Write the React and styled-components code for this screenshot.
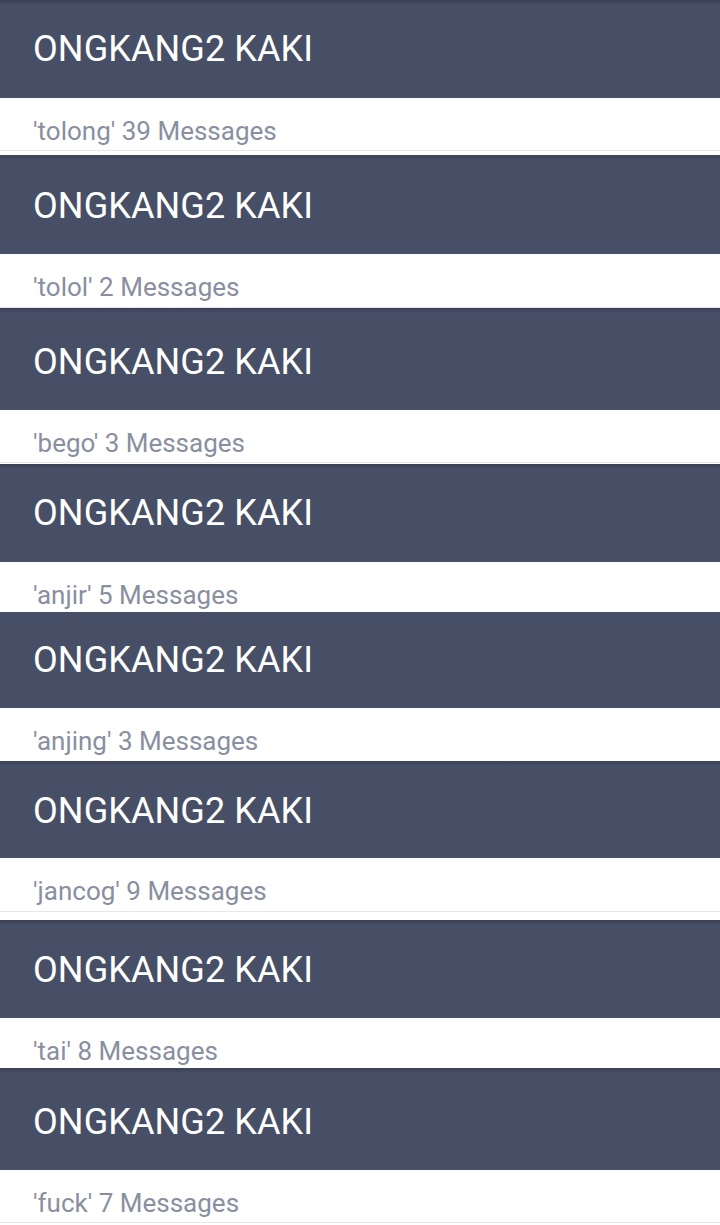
import styled, { createGlobalStyle } from "styled-components";

const GlobalStyle = createGlobalStyle`
  html, body {
    margin: 0;
    padding: 0;
    background: #ffffff;
  }
  body {
    font-family: Roboto, "Noto Sans", "Liberation Sans", sans-serif;
    overflow: hidden;
  }
`;

const List = styled.div`
  width: 720px;
  height: 1225px;
  overflow: hidden;
  display: flex;
  flex-direction: column;
`;

const Item = styled.div`
  display: flex;
  flex-direction: column;
  flex-shrink: 0;
`;

const Header = styled.div`
  height: ${(p) => p.$h}px;
  flex-shrink: 0;
  box-sizing: border-box;
  display: flex;
  align-items: center;
  padding: ${(p) => p.$pt}px 33px 0;
  background: ${(p) =>
    p.$shade
      ? "linear-gradient(#3c4357 0, #3f465b 2px, #474f66 5px, #474f66 100%)"
      : "#474f66"};
  color: #ffffff;
  font-size: 36px;
  letter-spacing: 0.1px;
`;

const Body = styled.div`
  height: ${(p) => p.$h}px;
  flex-shrink: 0;
  overflow: hidden;
  background: #ffffff;
  display: flex;
  flex-direction: column;
`;

const Caption = styled.div`
  height: ${(p) => p.$h}px;
  flex-shrink: 0;
  overflow: hidden;
  box-sizing: border-box;
  padding: 18px 33px 0;
  font-size: 26px;
  line-height: 30px;
  color: #898fa0;
  border-bottom: ${(p) => (p.$line ? "1px solid #e6e7ea" : "none")};
`;

const items = [
  { word: "tolong", count: 39, head: 98, pt: 0, body: 57, cap: 53, line: true, shade: true },
  { word: "tolol", count: 2, head: 99, pt: 2, body: 54, cap: 54, line: true, shade: true },
  { word: "bego", count: 3, head: 102, pt: 5, body: 54, cap: 53, line: true, shade: true },
  { word: "anjir", count: 5, head: 98, pt: 0, body: 50, cap: 50, line: false, shade: true },
  { word: "anjing", count: 3, head: 96, pt: 0, body: 53, cap: 53, line: false, shade: false },
  { word: "jancog", count: 9, head: 97, pt: 2, body: 62, cap: 54, line: true, shade: true },
  { word: "tai", count: 8, head: 98, pt: 2, body: 50, cap: 50, line: false, shade: true },
  { word: "fuck", count: 7, head: 102, pt: 6, body: 55, cap: 53, line: true, shade: true },
];

const App = () => {
  return (
    <>
      <GlobalStyle />
      <List>
        {items.map((it, i) => (
          <Item key={i}>
            <Header $h={it.head} $pt={it.pt} $shade={it.shade}>
              ONGKANG2 KAKI
            </Header>
            <Body $h={it.body}>
              <Caption $h={it.cap} $line={it.line}>
                '{it.word}' {it.count} Messages
              </Caption>
            </Body>
          </Item>
        ))}
      </List>
    </>
  );
};

export default App;
